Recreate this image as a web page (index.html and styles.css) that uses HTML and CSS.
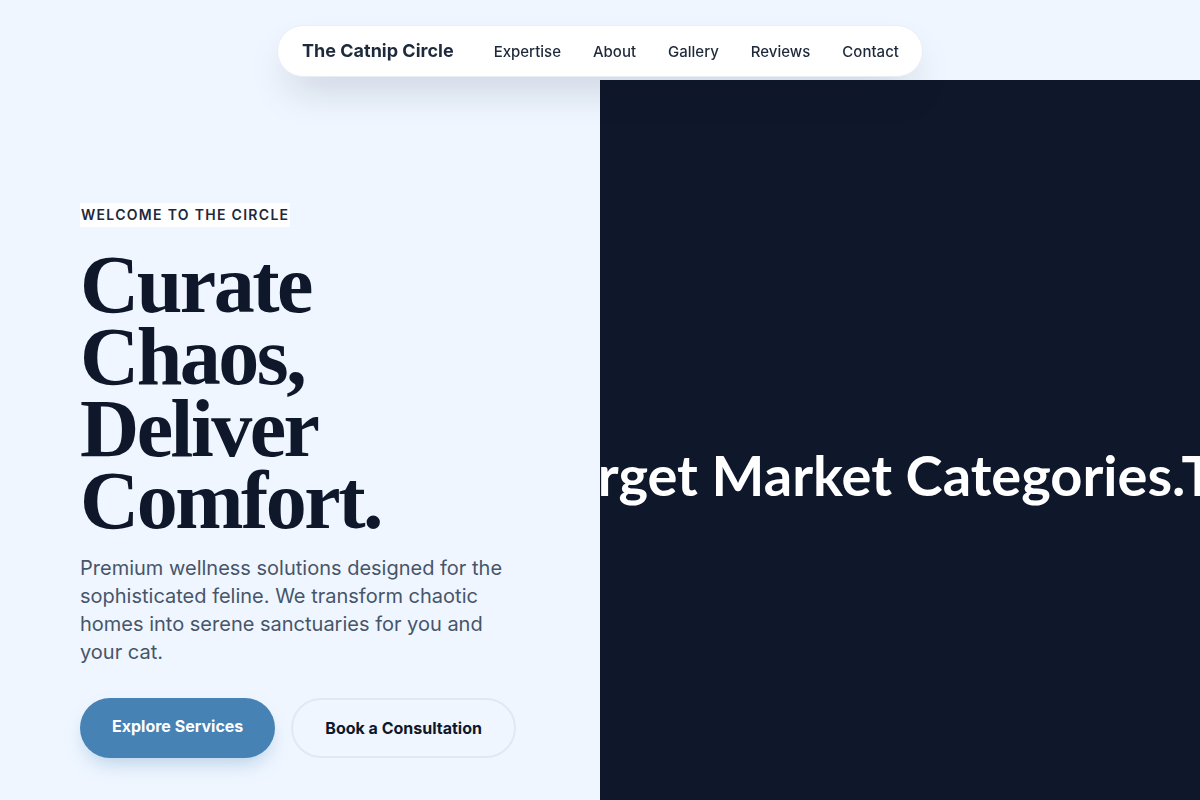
FILE: index.html
```html
<!DOCTYPE html>
<html lang="en">
<head>
<meta charset="utf-8">
<title>The Catnip Circle</title>
<link rel="stylesheet" href="styles.css">
</head>
<body>
<nav class="nav">
  <a class="brand" href="#">The Catnip Circle</a>
  <ul class="links">
    <li><a href="#">Expertise</a></li>
    <li><a href="#">About</a></li>
    <li><a href="#">Gallery</a></li>
    <li><a href="#">Reviews</a></li>
    <li><a href="#">Contact</a></li>
  </ul>
</nav>
<main class="hero">
  <section class="intro">
    <p class="eyebrow"><span>WELCOME TO THE CIRCLE</span></p>
    <h1 class="title"><span class="line">Curate</span><span class="line">Chaos,</span><span class="line">Deliver</span><span class="line">Comfort.</span></h1>
    <p class="lead">Premium wellness solutions designed for the sophisticated feline. We transform chaotic homes into serene sanctuaries for you and your cat.</p>
    <div class="actions">
      <a class="btn btn-primary" href="#">Explore Services</a>
      <a class="btn btn-outline" href="#">Book a Consultation</a>
    </div>
  </section>
  <section class="panel">
    <div class="marquee"><span class="track">Target Market Categories.Target Market Categories.</span></div>
  </section>
</main>
</body>
</html>
```
FILE: styles.css
```css
* { box-sizing: border-box; }
html, body { margin: 0; padding: 0; }
body {
  background: #eff6ff;
  font-family: Inter, "Noto Sans", sans-serif;
  color: #0f172a;
  height: 800px;
  overflow: hidden;
}
a { text-decoration: none; color: inherit; }

.nav {
  position: fixed;
  top: 25px;
  left: 0;
  right: 0;
  margin: 0 auto;
  width: max-content;
  height: 52px;
  display: flex;
  align-items: center;
  padding: 0 23px 1px 24px;
  background: #ffffff;
  border: 1px solid #e6eef6;
  border-radius: 26px;
  box-shadow: 0 20px 40px -10px rgba(15, 23, 42, 0.18);
  z-index: 10;
}
.brand {
  font-size: 18px;
  font-weight: 700;
  color: #1e293b;
  white-space: nowrap;
  margin-right: 40px;
}
.links {
  list-style: none;
  margin: 0;
  padding: 0;
  display: flex;
  gap: 32px;
  white-space: nowrap;
}
.links a {
  font-size: 15px;
  font-weight: 500;
  color: #1e293b;
}

.hero {
  display: grid;
  grid-template-columns: 600px 600px;
  height: 800px;
}
.intro {
  padding: 202px 0 0 80px;
}
.eyebrow {
  margin: 0;
  line-height: 24px;
}
.eyebrow span {
  display: inline-block;
  background: #ffffff;
  padding: 0 1px;
  font-size: 14px;
  font-weight: 600;
  letter-spacing: 1.3px;
  color: #1e293b;
}
.title {
  margin: 22px 0 0;
  font-family: "Liberation Serif", "Times New Roman", serif;
  font-weight: 700;
  font-size: 82px;
  line-height: 72px;
  letter-spacing: -2.5px;
  color: #0f172a;
}
.title .line {
  display: block;
  height: 72px;
}
.lead {
  margin: 17px 0 0;
  max-width: 440px;
  font-size: 20px;
  line-height: 28px;
  color: #475569;
}
.actions {
  display: flex;
  gap: 16px;
  margin-top: 32px;
}
.btn {
  display: inline-flex;
  align-items: center;
  height: 60px;
  padding: 0 32px;
  border-radius: 30px;
  font-size: 16px;
  font-weight: 700;
}
.btn-primary {
  background: #4682b4;
  color: #ffffff;
  padding-bottom: 4px;
  box-shadow: 0 10px 20px -6px rgba(70, 130, 180, 0.35);
}
.btn-outline {
  border: 2px solid #e2e8f0;
  color: #0f172a;
}

.panel {
  margin-top: 80px;
  background: #0f172a;
  display: flex;
  align-items: center;
  overflow: hidden;
}
.marquee {
  width: 100%;
  white-space: nowrap;
  overflow: hidden;
}
.track {
  display: inline-block;
  margin-left: -58px;
  font-family: Lato, "Noto Sans", sans-serif;
  font-weight: 700;
  font-size: 56px;
  line-height: 72px;
  color: #ffffff;
  padding-top: 70px;
}
```
